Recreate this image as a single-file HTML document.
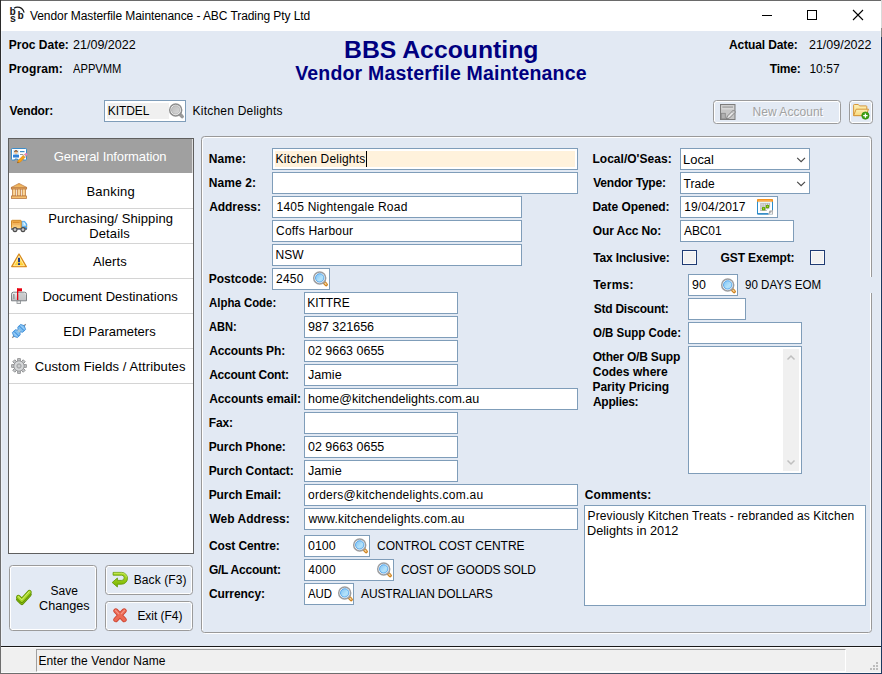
<!DOCTYPE html>
<html lang="en">
<head>
<meta charset="utf-8">
<title>Vendor Masterfile Maintenance - ABC Trading Pty Ltd</title>
<style>
html,body{margin:0;padding:0}
body{width:882px;height:674px;overflow:hidden;position:relative;background:#e2e9f3;font-family:"Liberation Sans",sans-serif;font-size:12px;color:#000}
.a{position:absolute}
.t{position:absolute;white-space:nowrap}
.in{position:absolute;box-sizing:border-box;border:1px solid #7f9db9;background:#fff;height:22px}
.ic{position:absolute;width:16px;height:16px;overflow:visible}
.sep{position:absolute;left:9px;width:184px;height:1px;background:#d4d4d4}
.btn{position:absolute;box-sizing:border-box;border:1px solid #9b9b9b;border-radius:3.5px;box-shadow:inset 0 0 0 1px #fff;background:#e3eaf4}
.cb{position:absolute;width:15px;height:15px;box-sizing:border-box;border:1px solid #1f3b73;background:#f1f1f1;box-shadow:inset 0 0 0 1px #fafafa}
</style>
</head>
<body>
<svg width="0" height="0" style="position:absolute">
 <defs>
  <linearGradient id="gGlass" x1="0" y1="0" x2="1" y2="1"><stop offset="0" stop-color="#7cc0f4"/><stop offset="0.6" stop-color="#b4e2fa"/><stop offset="1" stop-color="#98d0f6"/></linearGradient>
  <linearGradient id="gGlassG" x1="0" y1="0" x2="1" y2="1"><stop offset="0" stop-color="#bdbdbd"/><stop offset="1" stop-color="#d8d8d8"/></linearGradient>
  <linearGradient id="gOr" x1="0" y1="0" x2="0" y2="1"><stop offset="0" stop-color="#e9a03c"/><stop offset="1" stop-color="#fdd68a"/></linearGradient>
  <linearGradient id="gCol" x1="0" y1="0" x2="1" y2="0"><stop offset="0" stop-color="#f2b96a"/><stop offset="0.5" stop-color="#fde0a8"/><stop offset="1" stop-color="#f0b060"/></linearGradient>
  <linearGradient id="gYel" x1="0" y1="0" x2="0" y2="1"><stop offset="0" stop-color="#fff0a0"/><stop offset="1" stop-color="#ffc81e"/></linearGradient>
  <linearGradient id="gGray" x1="0" y1="0" x2="0" y2="1"><stop offset="0" stop-color="#f4f4f4"/><stop offset="1" stop-color="#b4b6b8"/></linearGradient>
  <linearGradient id="gBlue" x1="0" y1="0" x2="0" y2="1"><stop offset="0" stop-color="#7cc4f6"/><stop offset="1" stop-color="#2f8de0"/></linearGradient>
  <linearGradient id="gGrn" x1="0" y1="0" x2="0" y2="1"><stop offset="0" stop-color="#b4e02c"/><stop offset="1" stop-color="#78b400"/></linearGradient>
  <linearGradient id="gRed" x1="0" y1="0" x2="0" y2="1"><stop offset="0" stop-color="#f48870"/><stop offset="1" stop-color="#dc4a34"/></linearGradient>
  <linearGradient id="gFold" x1="0" y1="0" x2="0" y2="1"><stop offset="0" stop-color="#fdf0b8"/><stop offset="1" stop-color="#f8d878"/></linearGradient>

  <g id="mag">
   <path d="M11.500 11.800l1.700 1.800" stroke="#cf8420" stroke-width="3.500" stroke-linecap="round"/>
   <path d="M12 12.200l1 1.100" stroke="#f6d4a0" stroke-width="1.300" stroke-linecap="round"/>
   <circle cx="6.700" cy="6.900" r="6" fill="#fdfdfd" stroke="#9c9ea1" stroke-width="1.500"/>
   <circle cx="6.700" cy="6.900" r="4.200" fill="url(#gGlass)" stroke="#4a9ee8" stroke-width=".9"/>
  </g>
  <g id="magg">
   <path d="M11.500 11.800l1.700 1.800" stroke="#9a9a9a" stroke-width="3.500" stroke-linecap="round"/>
   <circle cx="6.700" cy="6.900" r="6" fill="#fdfdfd" stroke="#8e8e8e" stroke-width="1.500"/>
   <circle cx="6.700" cy="6.900" r="4.200" fill="url(#gGlassG)" stroke="#b0b0b0" stroke-width=".9"/>
  </g>
  <g id="cal">
   <rect x="0.500" y="0.500" width="15" height="14.500" rx="1" fill="#fff" stroke="#2a8ccb"/>
   <path d="M0 15.400v-1.200h11v1.200z" fill="#1f7fc0"/>
   <path d="M0 1a1 1 0 0 1 1-1h14a1 1 0 0 1 1 1v1.800h-16z" fill="#f7931e"/>
   <rect x="1.500" y="1.300" width="13" height=".8" fill="#fbb65c"/>
   <rect x="1" y="2.800" width="14" height="1.200" fill="#e2f5fc"/>
   <path d="M3.900 4.300v7.600M6.100 4.300v7.600M8.300 4.300v7.600M10.500 4.300v6M12.600 4.300v4M3.400 4.800h9.600M3.400 7h9.600M3.400 9.200h9M3.400 11.400h6.500" stroke="#b4b4b4" stroke-width="1" fill="none"/>
   <rect x="5" y="8.100" width="3.200" height="3.200" fill="#62a800"/>
   <rect x="8.900" y="5.900" width="3.200" height="3.200" fill="#62a800"/>
   <rect x="6" y="9.100" width="1.200" height="1.200" fill="#a4d43c"/>
   <rect x="9.900" y="6.900" width="1.200" height="1.200" fill="#a4d43c"/>
   <path d="M16 10.800v4.800h-6c2.600-.3 1.600-3 2.400-3.800s2.800.200 3.600-1z" fill="#a8a8a8"/>
   <path d="M15.200 12l-3.400 3.400h3.400z" fill="#ececec"/>
  </g>
  <g id="idcard">
   <path d="M0.5 1.2a.7.7 0 0 1 .7-.7h13.600a.7.7 0 0 1 .7.7v10.100a.7.7 0 0 1-.7.7h-2.800v-1h-2.500v1h-3v-1h-2.500v1h-2.800a.7.7 0 0 1-.7-.7z" fill="#fff" stroke="#3c8cc8"/>
   <rect x="2" y="2" width="6" height="7.500" fill="#d6efff"/>
   <path d="M2 9.5v-2.500c1-.8 5-.8 6 0v2.500z" fill="#2f7fd6"/>
   <circle cx="5" cy="4.600" r="1.700" fill="#f3c79a"/>
   <path d="M3.100 4.200c0-2.600 3.800-2.600 3.800 0c-1-.8-2.800-.8-3.800 0z" fill="#7a3e12"/>
   <rect x="9" y="3" width="4.500" height="1.200" fill="#3c8cc8"/>
   <rect x="9" y="6" width="3" height="1" fill="#9a9a9a"/>
   <path d="M6.300 14.900l1-2.600l6-6l1.900 1.900l-6 6z" fill="#f7a11a" stroke="#d07c0a" stroke-width=".5"/>
   <path d="M13.300 6.300l1-1a.9.900 0 0 1 1.300 0l.5.500a.9.900 0 0 1 0 1.300l-1 1z" fill="#f07cc0"/>
   <path d="M12.300 7.300l1-1l1.900 1.900l-1 1z" fill="#e8e8e8" stroke="#9a9a9a" stroke-width=".4"/>
   <path d="M6.300 14.900l.5-1.400l1 1z" fill="#6b4a2a"/>
  </g>
  <g id="bank">
   <path d="M8 0.400l7.600 4v1.400h-15.200v-1.400z" fill="url(#gOr)" stroke="#c08048" stroke-width=".8" stroke-linejoin="round"/>
   <rect x="0.400" y="4.300" width="15.200" height="1.700" fill="#f0b468" stroke="#b87840" stroke-width=".8"/>
   <rect x="1.500" y="6" width="3.300" height="7" fill="url(#gCol)" stroke="#c08048" stroke-width=".8"/>
   <rect x="6.350" y="6" width="3.300" height="7" fill="url(#gCol)" stroke="#c08048" stroke-width=".8"/>
   <rect x="11.200" y="6" width="3.300" height="7" fill="url(#gCol)" stroke="#c08048" stroke-width=".8"/>
   <rect x="0.400" y="13" width="15.200" height="2.500" fill="#f6c070" stroke="#b87840" stroke-width=".8"/>
  </g>
  <g id="truck" transform="translate(0,1.300)">
   <path d="M10.200 2h3.600l2 2.800v4.700h-5.600z" fill="url(#gBlue)" stroke="#2f8de0" stroke-width=".6"/>
   <path d="M11.300 3.200h2.200l1.400 2v1.800h-3.600z" fill="#a8dcfa"/>
   <path d="M12.700 3.200l1.500 2.600" stroke="#fff" stroke-width=".9"/>
   <rect x="15.200" y="6.700" width=".8" height="1" fill="#f7a11a"/>
   <rect x="0.500" y="1" width="9.700" height="8.200" rx=".8" fill="url(#gOr)" stroke="#cf8a2c"/>
   <rect x="2" y="2.600" width="6.600" height="1" fill="#d98a2c"/>
   <rect x="2" y="4.600" width="6.600" height=".7" fill="#f0b060"/>
   <rect x="2" y="6.200" width="6.600" height=".6" fill="#f6c47c"/>
   <rect x="0" y="9.100" width="16" height="1.300" fill="#4a5a78"/>
   <circle cx="4" cy="10.300" r="2" fill="#c8c8c8" stroke="#4a4a4a" stroke-width="1.100"/>
   <circle cx="12" cy="10.300" r="2" fill="#c8c8c8" stroke="#4a4a4a" stroke-width="1.100"/>
  </g>
  <g id="warn">
   <path d="M8 1l7.300 12.600h-14.600z" fill="url(#gYel)" stroke="#d98a1e" stroke-width="1.300" stroke-linejoin="round"/>
   <path d="M8 3.300l5.400 9.400h-10.800z" fill="none" stroke="#fff6c8" stroke-width=".7" stroke-linejoin="round"/>
   <rect x="7" y="4.800" width="2" height="4.400" fill="#1f3a8a"/>
   <rect x="7" y="10.200" width="2" height="1.800" fill="#1f3a8a"/>
  </g>
  <g id="mail">
   <rect x="6" y="12.500" width="3.600" height="3" fill="#e8e8e8" stroke="#8a8e92" stroke-width=".8"/>
   <path d="M0.500 6.200a2 2 0 0 1 2-2h11a2 2 0 0 1 2 2v6.600h-15z" fill="url(#gGray)" stroke="#7e8286"/>
   <path d="M7 12v-4.500a2.600 2.600 0 0 1 2.600-2.600h2.400a2.600 2.600 0 0 1 2.600 2.600v4.500z" fill="#c4c6c8" opacity=".8"/>
   <rect x="2" y="6" width="1.600" height="5" fill="#9a9da0"/>
   <rect x="6" y="0.500" width="1.300" height="11.500" fill="#e00010"/>
   <rect x="6" y="0.300" width="5" height="3" fill="#e8000f"/>
  </g>
  <g id="edi">
   <g transform="rotate(-45 8 8)">
    <path d="M-1.500 8h19" stroke="#8a8a8a" stroke-width="1.200"/>
    <path d="M0.500 8l1.800-3.600h3.800l1.900 2.400l1.900-2.400h3.800l1.800 3.600l-1.800 3.600h-3.800l-1.900-2.400l-1.900 2.400h-3.800z" fill="#7cbef2" stroke="#3a8ad6" stroke-width=".8" stroke-linejoin="round"/>
    <path d="M4.200 4.600v6.800M11.800 4.600v6.800" stroke="#2f7fd0" stroke-width=".8"/>
    <path d="M2.800 5.600v4.800M13.200 5.600v4.800" stroke="#b8dcf8" stroke-width=".7"/>
    <path d="M7 6.500v3M8 6.200v3.600M9 6.500v3" stroke="#e8d8c0" stroke-width=".5"/>
   </g>
  </g>
  <g id="gear">
   <g fill="#c6c8ca" stroke="#8e9092" stroke-width=".9" stroke-linejoin="round">
    <path id="gt" d="M6.600 0.600h2.800v3h-2.800z"/>
    <use href="#gt" transform="rotate(45 8 8)"/><use href="#gt" transform="rotate(90 8 8)"/><use href="#gt" transform="rotate(135 8 8)"/>
    <use href="#gt" transform="rotate(180 8 8)"/><use href="#gt" transform="rotate(225 8 8)"/><use href="#gt" transform="rotate(270 8 8)"/><use href="#gt" transform="rotate(315 8 8)"/>
   </g>
   <circle cx="8" cy="8" r="5.200" fill="#cfd1d3" stroke="#8e9092" stroke-width=".9"/>
   <circle cx="8" cy="8" r="4.300" fill="#d6d8da"/>
   <circle cx="8" cy="8" r="2.200" fill="#b8babc" stroke="#9a9c9e" stroke-width=".8"/>
   <circle cx="8" cy="8" r=".8" fill="#e8e8e8"/>
  </g>
  <g id="check">
   <path d="M2.400 9.400l3.400 3.300l7.600-8.300" fill="none" stroke="#5a8a00" stroke-width="4.600" stroke-linecap="round" stroke-linejoin="round"/>
   <path d="M2.400 9.400l3.400 3.300l7.600-8.300" fill="none" stroke="#86b810" stroke-width="3" stroke-linecap="round" stroke-linejoin="round"/>
   <path d="M2.400 7.200l3.400 3.300l7.600-8.300" fill="none" stroke="#5e9000" stroke-width="4.600" stroke-linecap="round" stroke-linejoin="round"/>
   <path d="M2.400 7.200l3.400 3.300l7.600-8.300" fill="none" stroke="#a6d622" stroke-width="3" stroke-linecap="round" stroke-linejoin="round"/>
   <path d="M2.300 6.600l3.500 3.300l7.400-8.200" fill="none" stroke="#d8f084" stroke-width=".9" stroke-linecap="round" stroke-linejoin="round"/>
  </g>
  <g id="back">
   <path d="M1.100 .400h8.500a5.900 5.900 0 0 1 0 11.800h-4.200v2.800l-5.200-4.500l5.200-4.500v2.400h4.200a2.600 2.600 0 0 0 0-5.200h-8.500z" fill="url(#gGrn)" stroke="#5e9600" stroke-width=".8" stroke-linejoin="round"/>
   <path d="M1.800 1.200h7.800a5.100 5.100 0 0 1 5 4.200" fill="none" stroke="#d2ee78" stroke-width=".7"/>
  </g>
  <g id="xx">
   <path d="M2.800 2.800l8.400 8.900M11.200 2.800l-8.400 8.900" stroke="#cc4432" stroke-width="5" stroke-linecap="round" fill="none"/>
   <path d="M2.800 2.800l8.400 8.900M11.200 2.800l-8.400 8.900" stroke="#ec6a54" stroke-width="3.400" stroke-linecap="round" fill="none"/>
   <path d="M2.600 2.400l3 3.200M11.400 2.400l-3 3.200" stroke="#f6988a" stroke-width="1.200" stroke-linecap="round" fill="none"/>
  </g>
  <g id="form">
   <rect x="0.500" y="0.500" width="14.500" height="15" fill="#c6c6c6" stroke="#7c7c7c"/>
   <rect x="1.500" y="1.500" width="12.500" height="4" fill="#d8d8d8"/>
   <rect x="2.300" y="2.400" width="10.800" height="1.300" fill="#9c9c9c"/>
   <rect x="1.300" y="9.300" width="4" height="5.500" fill="#b0b0b0" stroke="#888" stroke-width=".8"/>
   <path d="M6.300 15l1.200-3l6-6l2 2l-6 6z" fill="#e4e4e4" stroke="#7a7a7a" stroke-width=".9"/>
   <path d="M13 6.600l1.700 1.700M12 7.600l1.700 1.700" stroke="#8a8a8a" stroke-width=".6"/>
  </g>
  <g id="folder">
   <path d="M0.600 1.200a.7.7 0 0 1 .7-.7h4l1.200 1.400h6.600a.7.7 0 0 1 .7.700v9h-13.200z" fill="url(#gFold)" stroke="#d6983c"/>
   <path d="M0.600 11.600l2.600-6.400h12.300l-2.400 6.400z" fill="url(#gFold)" stroke="#d6983c"/>
   <circle cx="12.400" cy="11.600" r="3.700" fill="#3aa010" stroke="#2c8408" stroke-width=".6"/>
   <path d="M12.400 9.400v4.400M10.200 11.600h4.400" stroke="#fff" stroke-width="1.300"/>
  </g>
 </defs>
</svg>
<div class="a" style="left:0;top:0;width:882px;height:31px;background:#fff"></div>
<div class="a" style="left:0;top:0;width:882px;height:1px;background:#6a6a6a"></div>
<div class="a" style="left:0;top:0;width:1px;height:100px;background:#2b2b2b"></div>
<div class="a" style="left:0;top:100px;width:1px;height:574px;background:#6e6e6e"></div>
<div class="a" style="left:1px;top:31px;width:1px;height:615px;background:#edf2f9"></div>
<div class="a" style="left:880px;top:31px;width:1px;height:643px;background:#eef2f8"></div>
<div class="a" style="left:881px;top:0;width:1px;height:28px;background:#d9d9d9"></div>
<div class="a" style="left:881px;top:28px;width:1px;height:9px;background:#8a8a8a"></div>
<div class="a" style="left:881px;top:37px;width:1px;height:637px;background:#1b3a60"></div>
<svg class="a" style="left:9px;top:6px;width:17px;height:17px;overflow:visible" viewBox="0 0 17 17"><text x="0.6" y="8.6" font-family="Liberation Mono,monospace" font-weight="bold" font-size="10.5" fill="#1a1a1a">b</text><text x="0.7" y="15.800" font-family="Liberation Mono,monospace" font-weight="bold" font-size="10.5" fill="#1a1a1a">s</text><text x="8.600" y="12.700" font-family="Liberation Mono,monospace" font-weight="bold" font-size="10.5" fill="#1a1a1a">b</text><path d="M5 2.200C8 0 13.500 .800 15.100 6.600" fill="none" stroke="#1a1a1a" stroke-width="1.200"/></svg>
<svg class="a" style="left:750px;top:0;width:130px;height:31px" viewBox="0 0 130 31"><path d="M12 15.5h10" stroke="#000" stroke-width="1" fill="none"/><rect x="57.5" y="10.500" width="9" height="9" stroke="#000" stroke-width="1" fill="none"/><path d="M103 10l10 10M113 10l-10 10" stroke="#000" stroke-width="1.100" fill="none"/></svg>
<div class="in" style="left:104px;top:100px;width:82px"></div>
<div class="a" style="left:107px;top:103px;width:62px;height:16px;background:#f0f0f0"></div>
<svg class="ic" style="left:169px;top:103px" viewBox="0 0 16 16"><use href="#magg"/></svg>
<div class="btn" style="left:713px;top:100px;width:128px;height:24px"></div>
<svg class="ic" style="left:720px;top:104px" viewBox="0 0 16 16"><use href="#form"/></svg>
<div class="btn" style="left:849px;top:100px;width:24px;height:24px"></div>
<svg class="ic" style="left:853px;top:104px" viewBox="0 0 16 16"><use href="#folder"/></svg>
<div class="a" style="left:8px;top:138px;width:186px;height:416px;box-sizing:border-box;border:1px solid #5f5f5f;background:#fff"></div>
<div class="a" style="left:9px;top:139px;width:183px;height:34px;background:#a0a0a0"></div>
<div class="a" style="left:192px;top:139px;width:1px;height:34px;background:#dedede"></div>
<div class="sep" style="top:208px"></div>
<div class="sep" style="top:243px"></div>
<div class="sep" style="top:278px"></div>
<div class="sep" style="top:313px"></div>
<div class="sep" style="top:348px"></div>
<div class="sep" style="top:383px"></div>
<svg class="ic" style="left:11px;top:148px" viewBox="0 0 16 16"><use href="#idcard"/></svg>
<svg class="ic" style="left:11px;top:183px" viewBox="0 0 16 16"><use href="#bank"/></svg>
<svg class="ic" style="left:11px;top:218px" viewBox="0 0 16 16"><use href="#truck"/></svg>
<svg class="ic" style="left:11px;top:253px" viewBox="0 0 16 16"><use href="#warn"/></svg>
<svg class="ic" style="left:11px;top:288px" viewBox="0 0 16 16"><use href="#mail"/></svg>
<svg class="ic" style="left:11px;top:323px" viewBox="0 0 16 16"><use href="#edi"/></svg>
<svg class="ic" style="left:11px;top:358px" viewBox="0 0 16 16"><use href="#gear"/></svg>
<div class="btn" style="left:9px;top:565px;width:88px;height:66px"></div>
<svg class="ic" style="left:16px;top:590px" viewBox="0 0 16 16"><use href="#check"/></svg>
<div class="btn" style="left:105px;top:565px;width:88px;height:30px"></div>
<svg class="ic" style="left:112px;top:572px" viewBox="0 0 16 16"><use href="#back"/></svg>
<div class="btn" style="left:105px;top:601px;width:88px;height:30px"></div>
<svg class="a" style="left:113px;top:608px;width:14px;height:14.5px" viewBox="0 0 14 14.500"><use href="#xx"/></svg>
<div class="a" style="left:202px;top:137px;width:669px;height:497px;box-sizing:border-box;border:1px solid #fff;border-radius:3.5px"></div>
<div class="a" style="left:201px;top:136px;width:671px;height:497px;box-sizing:border-box;border:1px solid #999;border-radius:3.5px"></div>
<div class="in" style="left:272px;top:148px;width:306px;height:22px;"></div>
<div class="a" style="left:275px;top:151px;width:300px;height:16px;background:#fff2dc"></div>
<div class="a" style="left:366px;top:151px;width:1px;height:16px;background:#000"></div>
<div class="in" style="left:272px;top:172px;width:306px;height:22px;"></div>
<div class="in" style="left:272px;top:196px;width:250px;height:22px;"></div>
<div class="in" style="left:272px;top:220px;width:250px;height:22px;"></div>
<div class="in" style="left:272px;top:244px;width:250px;height:22px;"></div>
<div class="in" style="left:272px;top:268px;width:58px;height:22px;"></div>
<div class="in" style="left:304px;top:292px;width:154px;height:22px;"></div>
<div class="in" style="left:304px;top:316px;width:154px;height:22px;"></div>
<div class="in" style="left:304px;top:340px;width:154px;height:22px;"></div>
<div class="in" style="left:304px;top:364px;width:154px;height:22px;"></div>
<div class="in" style="left:304px;top:412px;width:154px;height:22px;"></div>
<div class="in" style="left:304px;top:436px;width:154px;height:22px;"></div>
<div class="in" style="left:304px;top:460px;width:154px;height:22px;"></div>
<div class="in" style="left:304px;top:388px;width:274px;height:22px;"></div>
<div class="in" style="left:304px;top:484px;width:274px;height:22px;"></div>
<div class="in" style="left:304px;top:508px;width:274px;height:22px;"></div>
<div class="in" style="left:304px;top:535px;width:66px;height:22px;"></div>
<div class="in" style="left:304px;top:559px;width:90px;height:22px;"></div>
<div class="in" style="left:304px;top:583px;width:50px;height:22px;"></div>
<div class="in" style="left:680px;top:148px;width:130px;height:22px;"></div>
<div class="in" style="left:680px;top:172px;width:130px;height:22px;"></div>
<svg class="a" style="left:795px;top:156px;width:12px;height:8px" viewBox="0 0 12 8"><path d="M2.200 1.800l3.900 3.900l3.900-3.900" fill="none" stroke="#484848" stroke-width="1.150"/></svg>
<svg class="a" style="left:795px;top:180px;width:12px;height:8px" viewBox="0 0 12 8"><path d="M2.200 1.800l3.900 3.900l3.900-3.900" fill="none" stroke="#484848" stroke-width="1.150"/></svg>
<div class="in" style="left:680px;top:196px;width:98px;height:22px;"></div>
<svg class="ic" style="left:757px;top:199px" viewBox="0 0 16 16"><use href="#cal"/></svg>
<div class="in" style="left:680px;top:220px;width:114px;height:22px;"></div>
<div class="cb" style="left:682px;top:250px"></div>
<div class="cb" style="left:810px;top:250px"></div>
<div class="in" style="left:688px;top:274px;width:50px;height:22px;"></div>
<div class="a" style="left:742px;top:277px;width:138px;height:16px;background:#e2e9f3"></div>
<div class="in" style="left:688px;top:298px;width:58px;height:22px;"></div>
<div class="in" style="left:688px;top:322px;width:114px;height:22px;"></div>
<div class="in" style="left:688px;top:346px;width:114px;height:128px;"></div>
<div class="a" style="left:783px;top:349px;width:16px;height:122px;background:#f0f0f0"></div>
<svg class="a" style="left:786px;top:354px;width:10px;height:7px" viewBox="0 0 10 7"><path d="M1.500 5.500l3.500-3.500l3.500 3.500" fill="none" stroke="#bfbfbf" stroke-width="1.500"/></svg>
<svg class="a" style="left:786px;top:459px;width:10px;height:7px" viewBox="0 0 10 7"><path d="M1.500 1.500l3.500 3.500l3.500-3.500" fill="none" stroke="#bfbfbf" stroke-width="1.500"/></svg>
<div class="in" style="left:584px;top:505px;width:282px;height:101px;"></div>
<svg class="ic" style="left:313px;top:271px" viewBox="0 0 16 16"><use href="#mag"/></svg>
<svg class="ic" style="left:353px;top:538px" viewBox="0 0 16 16"><use href="#mag"/></svg>
<svg class="ic" style="left:377px;top:562px" viewBox="0 0 16 16"><use href="#mag"/></svg>
<svg class="ic" style="left:337.5px;top:586px" viewBox="0 0 16 16"><use href="#mag"/></svg>
<svg class="ic" style="left:721px;top:277.5px" viewBox="0 0 16 16"><use href="#mag"/></svg>
<div class="a" style="left:1px;top:646px;width:880px;height:1px;background:#1a1a1a"></div>
<div class="a" style="left:1px;top:647px;width:880px;height:26px;background:#f0f0f0;box-sizing:border-box;border-top:1px solid #fcfcfc;border-bottom:1px solid #fafafa"></div>
<div class="a" style="left:36px;top:649px;width:810px;height:23px;box-sizing:border-box;border-left:1px solid #a0a0a0;border-top:1px solid #a0a0a0;border-right:1px solid #fff;border-bottom:1px solid #fff"></div>
<div class="a" style="left:0;top:673px;width:882px;height:1px;background:linear-gradient(90deg,#6e6e6e 0,#6e6e6e 40%,#1b3a60 100%)"></div>
<div class="a" style="left:876px;top:668px;width:2px;height:2px;background:#bcbcbc"></div>
<div class="a" style="left:873px;top:668px;width:2px;height:2px;background:#bcbcbc"></div>
<div class="a" style="left:876px;top:665px;width:2px;height:2px;background:#bcbcbc"></div>
<div class="a" style="left:870px;top:668px;width:2px;height:2px;background:#bcbcbc"></div>
<div class="a" style="left:876px;top:662px;width:2px;height:2px;background:#bcbcbc"></div>
<div class="a" style="left:873px;top:665px;width:2px;height:2px;background:#bcbcbc"></div>
<div class="t" id="wtitle" style="left:30.00px;top:9px;line-height:14px;font-size:12px;letter-spacing:-0.078px;">Vendor Masterfile Maintenance - ABC Trading Pty Ltd</div>
<div class="t" id="procdate" style="left:8.75px;top:38px;line-height:14px;font-size:12px;font-weight:bold;letter-spacing:0.006px;">Proc Date:</div>
<div class="t" id="date1" style="left:72.58px;top:38px;line-height:14px;font-size:12px;transform:scaleX(1.0441);transform-origin:0 0;">21/09/2022</div>
<div class="t" id="program" style="left:8.75px;top:62px;line-height:14px;font-size:12px;font-weight:bold;letter-spacing:0.086px;">Program:</div>
<div class="t" id="appvmm" style="left:73.10px;top:62px;line-height:14px;font-size:12px;transform:scaleX(0.9294);transform-origin:0 0;">APPVMM</div>
<div class="t" id="h1" style="left:344.35px;top:35.5px;line-height:27px;font-size:24px;font-weight:bold;transform:scaleX(1.0316);transform-origin:0 0;color:#000080;">BBS Accounting</div>
<div class="t" id="h2" style="left:295.15px;top:61.6px;line-height:22px;font-size:19.5px;font-weight:bold;letter-spacing:0.191px;color:#000080;">Vendor Masterfile Maintenance</div>
<div class="t" id="actual" style="left:729.05px;top:38px;line-height:14px;font-size:12px;font-weight:bold;letter-spacing:-0.123px;">Actual Date:</div>
<div class="t" id="date2" style="left:808.68px;top:38px;line-height:14px;font-size:12px;transform:scaleX(1.0390);transform-origin:0 0;">21/09/2022</div>
<div class="t" id="time" style="left:769.80px;top:62px;line-height:14px;font-size:12px;font-weight:bold;letter-spacing:-0.212px;">Time:</div>
<div class="t" id="t1057" style="left:809.40px;top:62px;line-height:14px;font-size:12px;letter-spacing:0.050px;">10:57</div>
<div class="t" id="vendor" style="left:9.50px;top:104px;line-height:14px;font-size:12px;font-weight:bold;letter-spacing:-0.150px;">Vendor:</div>
<div class="t" id="kitdel" style="left:107.80px;top:104px;line-height:14px;font-size:12px;letter-spacing:-0.070px;">KITDEL</div>
<div class="t" id="kd1" style="left:192.60px;top:104px;line-height:14px;font-size:12px;letter-spacing:0.210px;">Kitchen Delights</div>
<div class="t" id="newacc" style="left:752.50px;top:105px;line-height:14px;font-size:12px;letter-spacing:0.040px;color:#a2a2a2;text-shadow:1px 1px 0 #fff">New Account</div>
<div class="t" id="gi" style="left:53.65px;top:149px;line-height:15px;font-size:13px;letter-spacing:-0.108px;color:#fff;">General Information</div>
<div class="t" id="banking" style="left:86.50px;top:184px;line-height:15px;font-size:13px;letter-spacing:0.192px;">Banking</div>
<div class="t" id="purch" style="left:48.30px;top:211px;line-height:15px;font-size:13px;letter-spacing:0.095px;">Purchasing/ Shipping</div>
<div class="t" id="details" style="left:89.20px;top:226px;line-height:15px;font-size:13px;letter-spacing:0.142px;">Details</div>
<div class="t" id="alerts" style="left:93.00px;top:254px;line-height:15px;font-size:13px;letter-spacing:0.110px;">Alerts</div>
<div class="t" id="docdest" style="left:42.40px;top:289px;line-height:15px;font-size:13px;letter-spacing:0.045px;">Document Destinations</div>
<div class="t" id="edi" style="left:63.30px;top:324px;line-height:15px;font-size:13px;letter-spacing:-0.008px;">EDI Parameters</div>
<div class="t" id="custom" style="left:34.65px;top:359px;line-height:15px;font-size:13px;letter-spacing:0.108px;">Custom Fields / Attributes</div>
<div class="t" id="save" style="left:50.60px;top:584px;line-height:14px;font-size:12px;letter-spacing:-0.017px;">Save</div>
<div class="t" id="changes" style="left:38.67px;top:599px;line-height:14px;font-size:12px;transform:scaleX(1.0540);transform-origin:0 0;">Changes</div>
<div class="t" id="back" style="left:133.70px;top:573px;line-height:14px;font-size:12px;letter-spacing:0.106px;">Back (F3)</div>
<div class="t" id="exit" style="left:137.40px;top:609px;line-height:14px;font-size:12px;letter-spacing:-0.038px;">Exit (F4)</div>
<div class="t" id="status" style="left:38.40px;top:654px;line-height:14px;font-size:12px;letter-spacing:0.085px;">Enter the Vendor Name</div>
<div class="t" id="name" style="left:208.65px;top:152px;line-height:14px;font-size:12px;font-weight:bold;letter-spacing:0.188px;">Name:</div>
<div class="t" id="name2" style="left:208.65px;top:176px;line-height:14px;font-size:12px;font-weight:bold;letter-spacing:0.125px;">Name 2:</div>
<div class="t" id="address" style="left:209.15px;top:200px;line-height:14px;font-size:12px;font-weight:bold;letter-spacing:-0.036px;">Address:</div>
<div class="t" id="postcode" style="left:208.65px;top:272px;line-height:14px;font-size:12px;font-weight:bold;letter-spacing:0.056px;">Postcode:</div>
<div class="t" id="alpha" style="left:209.16px;top:296px;line-height:14px;font-size:12px;font-weight:bold;transform:scaleX(0.9516);transform-origin:0 0;">Alpha Code:</div>
<div class="t" id="abn" style="left:209.17px;top:320px;line-height:14px;font-size:12px;font-weight:bold;transform:scaleX(0.9217);transform-origin:0 0;">ABN:</div>
<div class="t" id="accph" style="left:209.15px;top:344px;line-height:14px;font-size:12px;font-weight:bold;letter-spacing:-0.118px;">Accounts Ph:</div>
<div class="t" id="acccont" style="left:209.15px;top:368px;line-height:14px;font-size:12px;font-weight:bold;letter-spacing:-0.237px;">Account Cont:</div>
<div class="t" id="accemail" style="left:209.15px;top:392px;line-height:14px;font-size:12px;font-weight:bold;letter-spacing:-0.061px;">Accounts email:</div>
<div class="t" id="fax" style="left:208.65px;top:416px;line-height:14px;font-size:12px;font-weight:bold;letter-spacing:-0.083px;">Fax:</div>
<div class="t" id="pphone" style="left:208.65px;top:440px;line-height:14px;font-size:12px;font-weight:bold;letter-spacing:-0.077px;">Purch Phone:</div>
<div class="t" id="pcontact" style="left:208.65px;top:464px;line-height:14px;font-size:12px;font-weight:bold;letter-spacing:-0.065px;">Purch Contact:</div>
<div class="t" id="pemail" style="left:208.65px;top:488px;line-height:14px;font-size:12px;font-weight:bold;letter-spacing:-0.073px;">Purch Email:</div>
<div class="t" id="web" style="left:209.40px;top:512px;line-height:14px;font-size:12px;font-weight:bold;letter-spacing:0.036px;">Web Address:</div>
<div class="t" id="cost" style="left:208.90px;top:539px;line-height:14px;font-size:12px;font-weight:bold;letter-spacing:-0.100px;">Cost Centre:</div>
<div class="t" id="gl" style="left:208.90px;top:563px;line-height:14px;font-size:12px;font-weight:bold;letter-spacing:-0.236px;">G/L Account:</div>
<div class="t" id="currency" style="left:208.90px;top:587px;line-height:14px;font-size:12px;font-weight:bold;letter-spacing:-0.063px;">Currency:</div>
<div class="t" id="kd2" style="left:275.60px;top:152px;line-height:14px;font-size:12px;letter-spacing:0.197px;">Kitchen Delights</div>
<div class="t" id="addr1" style="left:276.50px;top:200px;line-height:14px;font-size:12px;letter-spacing:0.235px;">1405 Nightengale Road</div>
<div class="t" id="addr2" style="left:276.00px;top:224px;line-height:14px;font-size:12px;letter-spacing:0.213px;">Coffs Harbour</div>
<div class="t" id="addr3" style="left:275.50px;top:248px;line-height:14px;font-size:12px;letter-spacing:0.100px;">NSW</div>
<div class="t" id="pc" style="left:276.00px;top:272px;line-height:14px;font-size:12px;letter-spacing:0.217px;">2450</div>
<div class="t" id="kittre" style="left:307.20px;top:296px;line-height:14px;font-size:12px;letter-spacing:-0.030px;">KITTRE</div>
<div class="t" id="abnv" style="left:307.68px;top:320px;line-height:14px;font-size:12px;transform:scaleX(1.0416);transform-origin:0 0;">987 321656</div>
<div class="t" id="ph1" style="left:307.68px;top:344px;line-height:14px;font-size:12px;transform:scaleX(1.0386);transform-origin:0 0;">02 9663 0655</div>
<div class="t" id="jamie1" style="left:308.24px;top:368px;line-height:14px;font-size:12px;transform:scaleX(1.0528);transform-origin:0 0;">Jamie</div>
<div class="t" id="email1" style="left:307.72px;top:392px;line-height:14px;font-size:12px;transform:scaleX(1.0421);transform-origin:0 0;">home@kitchendelights.com.au</div>
<div class="t" id="ph2" style="left:307.68px;top:440px;line-height:14px;font-size:12px;transform:scaleX(1.0386);transform-origin:0 0;">02 9663 0655</div>
<div class="t" id="jamie2" style="left:308.24px;top:464px;line-height:14px;font-size:12px;transform:scaleX(1.0528);transform-origin:0 0;">Jamie</div>
<div class="t" id="email2" style="left:308.00px;top:488px;line-height:14px;font-size:12px;letter-spacing:0.246px;">orders@kitchendelights.com.au</div>
<div class="t" id="webv" style="left:308.50px;top:512px;line-height:14px;font-size:12px;letter-spacing:0.208px;">www.kitchendelights.com.au</div>
<div class="t" id="c0100" style="left:307.98px;top:539px;line-height:14px;font-size:12px;transform:scaleX(1.0369);transform-origin:0 0;">0100</div>
<div class="t" id="c4000" style="left:308.25px;top:563px;line-height:14px;font-size:12px;letter-spacing:0.233px;">4000</div>
<div class="t" id="aud" style="left:308.00px;top:587px;line-height:14px;font-size:12px;transform:scaleX(0.9495);transform-origin:0 0;">AUD</div>
<div class="t" id="ccc" style="left:377.10px;top:539px;line-height:14px;font-size:12px;letter-spacing:0.008px;">CONTROL COST CENTRE</div>
<div class="t" id="cogs" style="left:401.00px;top:563px;line-height:14px;font-size:12px;letter-spacing:-0.135px;">COST OF GOODS SOLD</div>
<div class="t" id="aud2" style="left:361.10px;top:587px;line-height:14px;font-size:12px;letter-spacing:-0.179px;">AUSTRALIAN DOLLARS</div>
<div class="t" id="local" style="left:592.45px;top:152px;line-height:14px;font-size:12px;font-weight:bold;letter-spacing:0.025px;">Local/O'Seas:</div>
<div class="t" id="vtype" style="left:593.20px;top:176px;line-height:14px;font-size:12px;font-weight:bold;letter-spacing:-0.218px;">Vendor Type:</div>
<div class="t" id="dopen" style="left:592.45px;top:200px;line-height:14px;font-size:12px;font-weight:bold;letter-spacing:-0.077px;">Date Opened:</div>
<div class="t" id="ouracc" style="left:592.70px;top:224px;line-height:14px;font-size:12px;font-weight:bold;letter-spacing:-0.090px;">Our Acc No:</div>
<div class="t" id="taxinc" style="left:593.20px;top:251px;line-height:14px;font-size:12px;font-weight:bold;letter-spacing:-0.146px;">Tax Inclusive:</div>
<div class="t" id="gst" style="left:720.60px;top:251px;line-height:14px;font-size:12px;font-weight:bold;letter-spacing:-0.135px;">GST Exempt:</div>
<div class="t" id="terms" style="left:593.20px;top:278px;line-height:14px;font-size:12px;font-weight:bold;letter-spacing:0.240px;">Terms:</div>
<div class="t" id="std" style="left:593.70px;top:302px;line-height:14px;font-size:12px;font-weight:bold;letter-spacing:-0.242px;">Std Discount:</div>
<div class="t" id="obsupp" style="left:592.72px;top:326px;line-height:14px;font-size:12px;font-weight:bold;transform:scaleX(0.9569);transform-origin:0 0;">O/B Supp Code:</div>
<div class="t" id="other" style="left:592.70px;top:350px;line-height:14px;font-size:12px;font-weight:bold;letter-spacing:-0.185px;">Other O/B Supp</div>
<div class="t" id="codes" style="left:592.70px;top:365px;line-height:14px;font-size:12px;font-weight:bold;letter-spacing:0.035px;">Codes where</div>
<div class="t" id="parity" style="left:592.45px;top:380px;line-height:14px;font-size:12px;font-weight:bold;letter-spacing:-0.054px;">Parity Pricing</div>
<div class="t" id="applies" style="left:592.95px;top:395px;line-height:14px;font-size:12px;font-weight:bold;letter-spacing:-0.243px;">Applies:</div>
<div class="t" id="comments" style="left:584.80px;top:488px;line-height:14px;font-size:12px;font-weight:bold;letter-spacing:0.050px;">Comments:</div>
<div class="t" id="vlocal" style="left:682.52px;top:153px;line-height:14px;font-size:12px;transform:scaleX(1.0778);transform-origin:0 0;">Local</div>
<div class="t" id="vtrade" style="left:683.45px;top:177px;line-height:14px;font-size:12px;letter-spacing:0.112px;">Trade</div>
<div class="t" id="date3" style="left:684.20px;top:200px;line-height:14px;font-size:12px;letter-spacing:0.144px;">19/04/2017</div>
<div class="t" id="abc01" style="left:684.00px;top:224px;line-height:14px;font-size:12px;letter-spacing:-0.100px;">ABC01</div>
<div class="t" id="n90" style="left:692.18px;top:278px;line-height:14px;font-size:12px;transform:scaleX(1.0320);transform-origin:0 0;">90</div>
<div class="t" id="days" style="left:745.12px;top:278px;line-height:14px;font-size:12px;transform:scaleX(0.9621);transform-origin:0 0;">90 DAYS EOM</div>
<div class="t" id="c1" style="left:587.50px;top:509px;line-height:14px;font-size:12px;letter-spacing:0.140px;">Previously Kitchen Treats - rebranded as Kitchen</div>
<div class="t" id="c2" style="left:587.24px;top:524px;line-height:14px;font-size:12px;transform:scaleX(1.0615);transform-origin:0 0;">Delights in 2012</div>
</body>
</html>
